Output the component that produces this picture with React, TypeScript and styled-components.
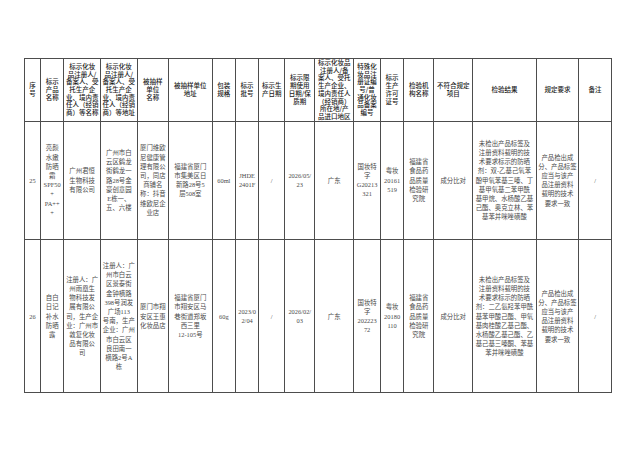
import React from "react";
import styled, { createGlobalStyle } from "styled-components";

const GlobalStyle = createGlobalStyle`
  html, body {
    margin: 0;
    padding: 0;
    background: #ffffff;
  }
`;

type Cell = string[];

const columns: { width: number; head: Cell }[] = [
  { width: 16, head: ["序", "号"] },
  { width: 23.3, head: ["标示", "产品", "名称"] },
  { width: 36.7, head: ["标示化妆", "品注册人/", "备案人、受", "托生产企", "业、境内责", "任人（经销", "商）等名称"] },
  { width: 36.7, head: ["标示化妆", "品注册人/", "备案人、受", "托生产企", "业、境内责", "任人（经销", "商）等地址"] },
  { width: 31.3, head: ["被抽样", "单位", "名称"] },
  { width: 43.7, head: ["被抽样单位", "地址"] },
  { width: 23.3, head: ["包装", "规格"] },
  { width: 23.3, head: ["标示", "批号"] },
  { width: 26, head: ["标示生", "产日期"] },
  { width: 30, head: ["标示限", "期使用", "日期/保", "质期"] },
  { width: 39, head: ["标示化妆品", "注册人/备", "案人、受托", "生产企业、", "境内责任人", "（经销商）", "所在地/产", "品进口地区"] },
  { width: 26.7, head: ["特殊化", "妆品注", "册证编", "号/普", "通化妆", "品备案", "编号"] },
  { width: 23.3, head: ["标示", "生产", "许可", "证号"] },
  { width: 30, head: ["检验机", "构名称"] },
  { width: 39, head: ["不符合规定", "项目"] },
  { width: 63.4, head: ["检验结果"] },
  { width: 42.6, head: ["规定要求"] },
  { width: 32.7, head: ["备注"] },
];

const institute = ["福建省", "食品药", "品质量", "检验研", "究院"];
const requirement = ["产品检出成", "分、产品标签", "应当与该产", "品注册资料", "载明的技术", "要求一致"];

const rows: { height: number; cells: Cell[] }[] = [
  {
    height: 118.3,
    cells: [
      ["25"],
      ["亮颜", "水嫩", "防晒", "霜", "SPF50", "+", "PA++", "+"],
      ["广州君恒", "生物科技", "有限公司"],
      ["广州市白", "云区鹤龙", "街鹤龙一", "路28号金", "豪创意园", "E栋一、", "五、六楼"],
      ["厦门维欧", "尼健康管", "理有限公", "司，同店", "商铺名", "称：抖音", "维欧尼企", "业店"],
      ["福建省厦门", "市集美区日", "新路28号5", "层508室"],
      ["60ml"],
      ["JHDE", "2401F"],
      ["/"],
      ["2026/05/", "23"],
      ["广东"],
      ["国妆特", "字", "G20213", "321"],
      ["粤妆", "20161", "519"],
      institute,
      ["成分比对"],
      [
        "未检出产品标签及",
        "注册资料载明的技",
        "术要求标示的防晒",
        "剂：双-乙基己氧苯",
        "酚甲氧苯基三嗪、丁",
        "基甲氧基二苯甲酰",
        "基甲烷、水杨酸乙基",
        "己酯、奥克立林、苯",
        "基苯并咪唑磺酸",
      ],
      requirement,
      ["/"],
    ],
  },
  {
    height: 153.4,
    cells: [
      ["26"],
      ["自白", "日记", "补水", "防晒", "露"],
      ["注册人：广", "州雨凰生", "物科技发", "展有限公", "司，生产企", "业：广州市", "敦复化妆", "品有限公", "司"],
      [
        "注册人：广",
        "州市白云",
        "区景泰街",
        "金钟横路",
        "398号润发",
        "广场113",
        "号南，生产",
        "企业：广州",
        "市白云区",
        "良田南一",
        "横路2号A",
        "栋",
      ],
      ["厦门市翔", "安区王惠", "化妆品店"],
      ["福建省厦门", "市翔安区马", "巷街道郑坂", "西三里", "12-105号"],
      ["60g"],
      ["2023/0", "2/04"],
      ["/"],
      ["2026/02/", "03"],
      ["广东"],
      ["国妆特", "字", "202223", "72"],
      ["粤妆", "20180", "110"],
      institute,
      ["成分比对"],
      [
        "未检出产品标签及",
        "注册资料载明的技",
        "术要求标示的防晒",
        "剂：二乙氨羟苯甲酰",
        "基苯甲酸己酯、甲氧",
        "基肉桂酸乙基己酯、",
        "水杨酸乙基己酯、乙",
        "基己基三嗪酮、苯基",
        "苯并咪唑磺酸",
      ],
      requirement,
      ["/"],
    ],
  },
];

const Page = styled.div`
  padding: 58px 0 0 24px;
`;

const Table = styled.table`
  width: 587px;
  table-layout: fixed;
  border-collapse: collapse;
  border: 1px solid #4d4d4d;
`;

const Row = styled.tr<{ $h: number }>`
  height: ${(p) => p.$h}px;
`;

const HeadCell = styled.th`
  border: 1px solid #4d4d4d;
  padding: 0;
  text-align: center;
  vertical-align: middle;
  font-family: "Noto Sans CJK SC", sans-serif;
  font-weight: 500;
  font-size: 6.5px;
  line-height: 7.7px;
  color: #1c1c1c;
`;

const BodyCell = styled.td`
  border: 1px solid #4d4d4d;
  padding: 0;
  text-align: center;
  vertical-align: middle;
  font-family: "Liberation Serif", "Noto Sans CJK SC", serif;
  font-size: 6.4px;
  line-height: 9.2px;
  color: #4a4a4a;
`;

const Line = styled.span`
  display: block;
  white-space: nowrap;
`;

const Lines: React.FC<{ lines: Cell }> = ({ lines }) => (
  <>
    {lines.map((l, i) => (
      <Line key={i}>{l}</Line>
    ))}
  </>
);

const App: React.FC = () => {
  return (
    <Page>
      <GlobalStyle />
      <Table>
        <colgroup>
          {columns.map((c, i) => (
            <col key={i} style={{ width: c.width }} />
          ))}
        </colgroup>
        <thead>
          <Row $h={61}>
            {columns.map((c, i) => (
              <HeadCell key={i}>
                <Lines lines={c.head} />
              </HeadCell>
            ))}
          </Row>
        </thead>
        <tbody>
          {rows.map((r, ri) => (
            <Row key={ri} $h={r.height}>
              {r.cells.map((cell, ci) => (
                <BodyCell key={ci}>
                  <Lines lines={cell} />
                </BodyCell>
              ))}
            </Row>
          ))}
        </tbody>
      </Table>
    </Page>
  );
};

export default App;
